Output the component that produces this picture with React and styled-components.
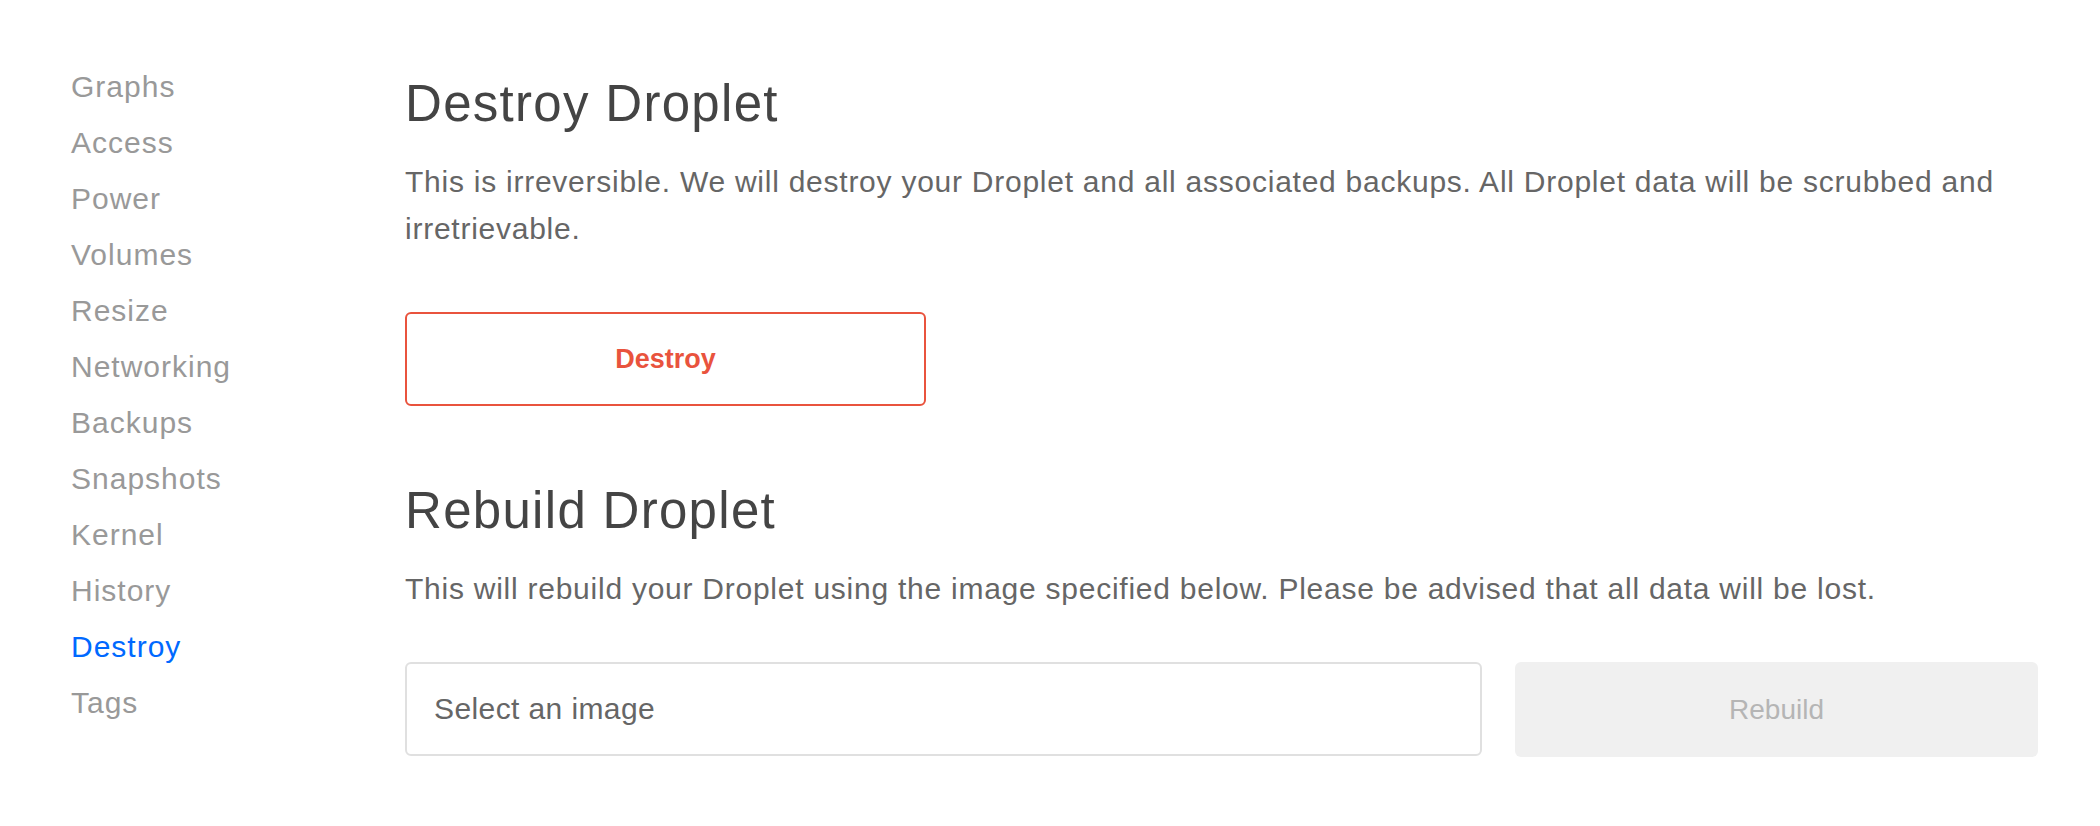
import React from 'react';
import styled, { createGlobalStyle } from 'styled-components';

const GlobalStyle = createGlobalStyle`
  body {
    margin: 0;
    background: #fff;
    font-family: "Liberation Sans", Arial, sans-serif;
  }
`;

const Page = styled.div`
  display: grid;
  grid-template-columns: 334px 1633px;
  padding: 59px 0 0 71px;
`;

const SideNav = styled.nav`
  display: flex;
  flex-direction: column;
`;

const NavItem = styled.a`
  font-size: 30px;
  line-height: 56px;
  letter-spacing: 1px;
  color: ${(p) => (p.$active ? '#0069ff' : '#999999')};
  text-decoration: none;
  cursor: pointer;
`;

const Content = styled.main`
  display: flex;
  flex-direction: column;
`;

const Title = styled.h2`
  margin: ${(p) => p.$top}px 0 0;
  font-size: 51px;
  line-height: 60px;
  letter-spacing: 1.3px;
  font-weight: 400;
  color: #444444;
`;

const Text = styled.p`
  margin: 24px 0 0;
  font-size: 30px;
  line-height: 47px;
  letter-spacing: 0.75px;
  color: #666666;
`;

const DestroyButton = styled.button`
  margin-top: 60px;
  width: 521px;
  height: 94px;
  border: 2px solid #e9533d;
  border-radius: 6px;
  background: #fff;
  color: #e9533d;
  font-family: inherit;
  font-size: 27px;
  font-weight: 700;
  cursor: pointer;
`;

const RebuildRow = styled.div`
  margin-top: 50px;
  display: flex;
  gap: 33px;
`;

const ImageSelect = styled.div`
  flex: 1;
  height: 94px;
  box-sizing: border-box;
  border: 2px solid #e0e0e0;
  border-radius: 6px;
  display: flex;
  align-items: center;
  padding: 0 27px;
  font-size: 30px;
  letter-spacing: 0.4px;
  color: #666666;
  cursor: pointer;
`;

const RebuildButton = styled.button`
  width: 523px;
  height: 95px;
  border: none;
  border-radius: 6px;
  background: #f0f0f0;
  color: #b5b5b5;
  font-family: inherit;
  font-size: 28px;
  cursor: not-allowed;
`;

const navItems = [
  'Graphs',
  'Access',
  'Power',
  'Volumes',
  'Resize',
  'Networking',
  'Backups',
  'Snapshots',
  'Kernel',
  'History',
  'Destroy',
  'Tags',
];

export default function App() {
  return (
    <>
      <GlobalStyle />
      <Page>
        <SideNav>
          {navItems.map((item) => (
            <NavItem key={item} $active={item === 'Destroy'}>
              {item}
            </NavItem>
          ))}
        </SideNav>
        <Content>
          <Title $top={15}>Destroy Droplet</Title>
          <Text>
            This is irreversible. We will destroy your Droplet and all associated backups. All
            Droplet data will be scrubbed and irretrievable.
          </Text>
          <DestroyButton>Destroy</DestroyButton>
          <Title $top={75}>Rebuild Droplet</Title>
          <Text>
            This will rebuild your Droplet using the image specified below. Please be advised
            that all data will be lost.
          </Text>
          <RebuildRow>
            <ImageSelect>Select an image</ImageSelect>
            <RebuildButton disabled>Rebuild</RebuildButton>
          </RebuildRow>
        </Content>
      </Page>
    </>
  );
}
